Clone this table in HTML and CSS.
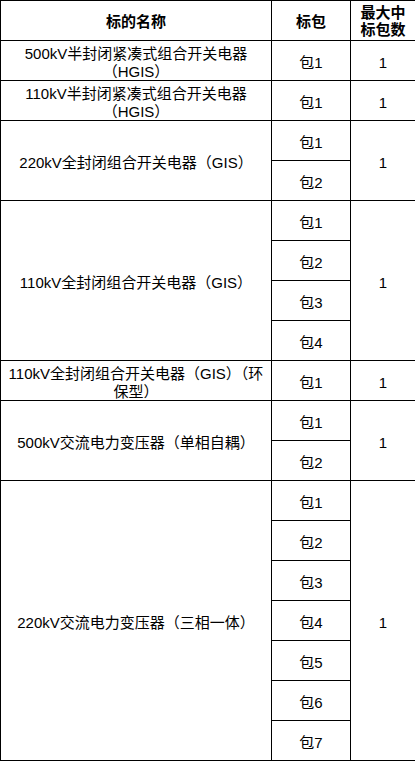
FILE: index.html
```html
<!DOCTYPE html>
<html lang="zh-CN">
<head>
<meta charset="utf-8">
<title>标包</title>
<link rel="stylesheet" href="styles.css">
</head>
<body>
<table class="bid-table">
  <colgroup>
    <col class="c-name">
    <col class="c-pkg">
    <col class="c-max">
  </colgroup>
  <thead>
    <tr>
      <th>标的名称</th>
      <th>标包</th>
      <th class="narrow">最大中<br>标包数</th>
    </tr>
  </thead>
  <tbody>
    <tr>
      <td>500kV半封闭紧凑式组合开关电器<br>（HGIS）</td>
      <td>包1</td>
      <td>1</td>
    </tr>
    <tr>
      <td>110kV半封闭紧凑式组合开关电器<br>（HGIS）</td>
      <td>包1</td>
      <td>1</td>
    </tr>
    <tr>
      <td rowspan="2">220kV全封闭组合开关电器（GIS）</td>
      <td>包1</td>
      <td rowspan="2">1</td>
    </tr>
    <tr><td>包2</td></tr>
    <tr>
      <td rowspan="4">110kV全封闭组合开关电器（GIS）</td>
      <td>包1</td>
      <td rowspan="4">1</td>
    </tr>
    <tr><td>包2</td></tr>
    <tr><td>包3</td></tr>
    <tr><td>包4</td></tr>
    <tr>
      <td>110kV全封闭组合开关电器（GIS）（环<br>保型）</td>
      <td>包1</td>
      <td>1</td>
    </tr>
    <tr>
      <td rowspan="2">500kV交流电力变压器（单相自耦）</td>
      <td>包1</td>
      <td rowspan="2">1</td>
    </tr>
    <tr><td>包2</td></tr>
    <tr>
      <td rowspan="7">220kV交流电力变压器（三相一体）</td>
      <td>包1</td>
      <td rowspan="7">1</td>
    </tr>
    <tr><td>包2</td></tr>
    <tr><td>包3</td></tr>
    <tr><td>包4</td></tr>
    <tr><td>包5</td></tr>
    <tr><td>包6</td></tr>
    <tr><td>包7</td></tr>
  </tbody>
</table>
</body>
</html>
```

FILE: styles.css
```css
html, body {
  margin: 0;
  padding: 0;
  background: #fff;
}

body {
  font-family: "Liberation Sans", "Noto Sans CJK SC", sans-serif;
  font-size: 15px;
  color: #000;
}

.bid-table {
  border-collapse: collapse;
  table-layout: fixed;
  width: 415px;
}

.c-name { width: 271px; }
.c-pkg { width: 79px; }
.c-max { width: 65px; }

.bid-table tr {
  height: 40px;
}

.bid-table th,
.bid-table td {
  border: 1px solid #000;
  text-align: center;
  vertical-align: middle;
  padding: 0 2px;
  white-space: nowrap;
}

.bid-table th {
  font-weight: bold;
  line-height: 17px;
  padding-top: 1px;
}

.bid-table td {
  font-weight: normal;
  line-height: 17.5px;
  padding-top: 4px;
  padding-bottom: 0;
}
```
